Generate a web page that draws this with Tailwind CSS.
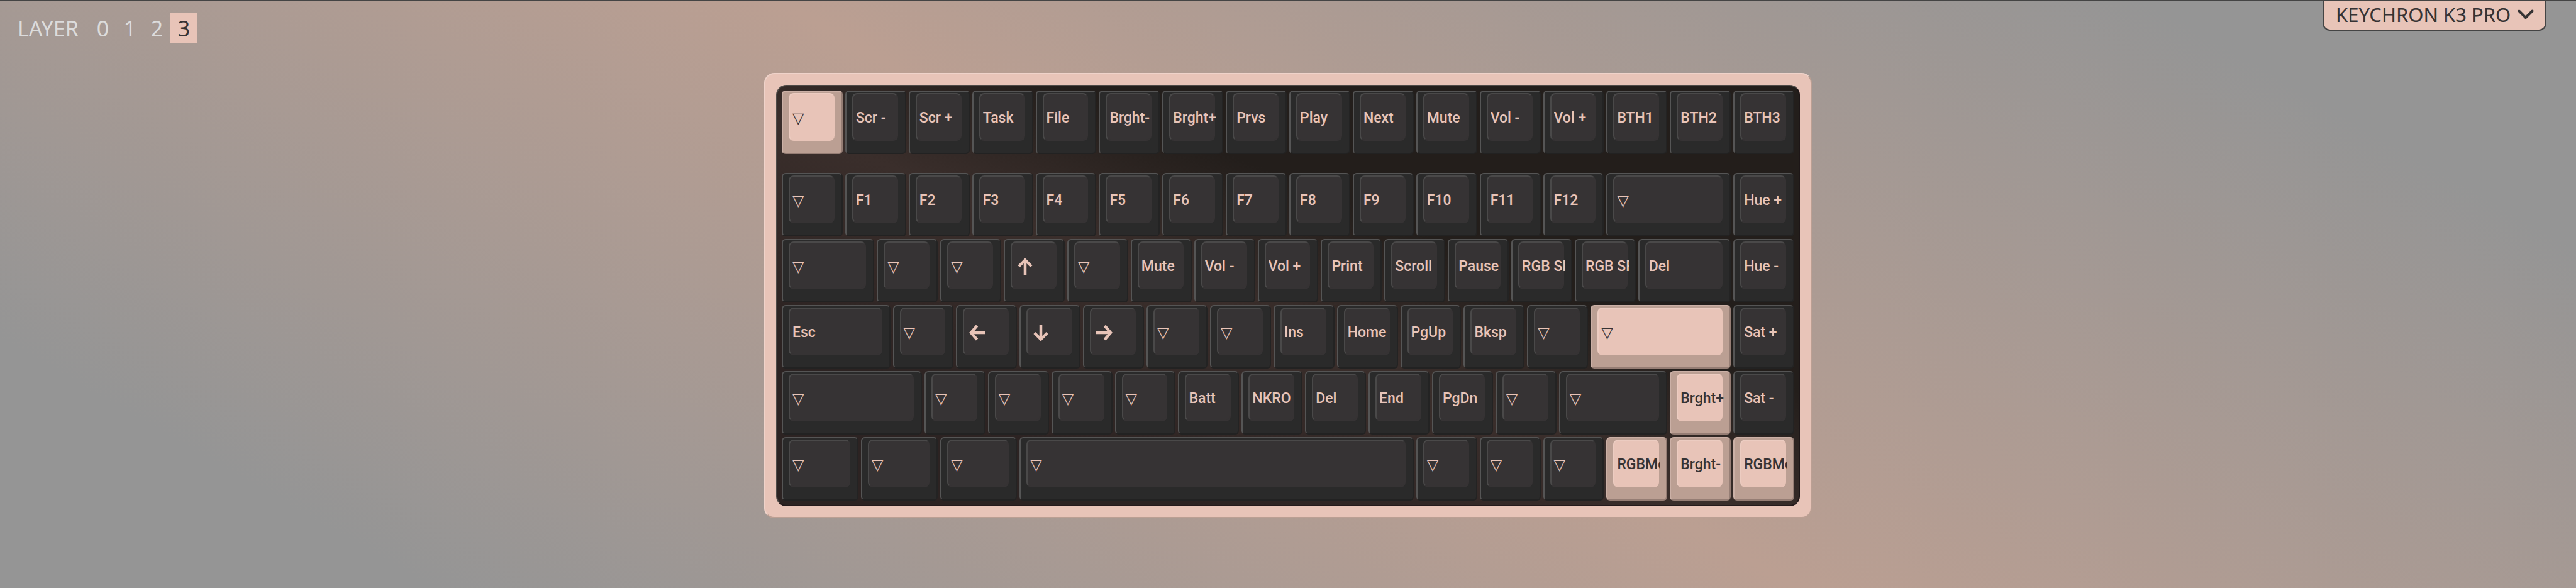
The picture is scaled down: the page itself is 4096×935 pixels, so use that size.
<!DOCTYPE html>
<html lang="en">
<head>
<meta charset="utf-8">
<meta name="viewport" content="width=device-width, initial-scale=1">
<title>Keychron K3 Pro</title>
<script src="https://cdn.jsdelivr.net/npm/@tailwindcss/browser@4"></script>
</head>
<body class="min-h-screen flex flex-col border-t-2 border-[#444444] bg-[linear-gradient(210deg,#959595_12%,#bb9f92_50%,#959595_88%)] font-['Noto_Sans',sans-serif]">
  <header class="flex items-start justify-between pl-7 pr-[47px]">
    <nav aria-label="Layer" class="flex items-center pt-[19px] text-[34px] leading-[48px] text-[#dcdcdc]">
      <span class="w-[114px]">LAYER</span>
      <button type="button" class="w-[43px] h-12">0</button>
      <button type="button" class="w-[43px] h-12">1</button>
      <button type="button" class="w-[43px] h-12">2</button>
      <button type="button" aria-pressed="true" class="w-[43px] h-12 bg-[#e8c4b8] text-[#363334]">3</button>
    </nav>
    <div class="relative">
      <select aria-label="Keyboard" class="block appearance-none h-[47px] w-[356px] pl-[19px] pr-10 pb-1 rounded-b-xl border-2 border-t-0 border-[#444444] bg-[#e8c4b8] text-[31px] leading-[42px] text-[#363334]">
        <option>KEYCHRON K3 PRO</option>
      </select>
      <svg class="absolute right-5 top-3 w-[26px] h-[18px] pointer-events-none" viewBox="0 0 26 18" fill="none" stroke="#363334" stroke-width="4" stroke-linecap="round" stroke-linejoin="round" aria-hidden="true"><path d="M2.5 3.5 13 14 23.500 3.500"/></svg>
    </div>
  </header>

  <main class="flex justify-center pt-[47px]">
    <div class="w-full max-w-[1666px] p-[17px] rounded-2xl border-2 border-t-[#efd3ca] border-l-[#efd3ca] border-r-[#bb9f93] border-b-[#bb9f93] bg-[#e8c4b8]">
      <div id="board" class="grid grid-cols-64 gap-1 p-[7px] rounded-2xl border-2 border-t-[#4f4b48] border-l-[#4f4b48] border-r-[#1d1617] border-b-[#241a1b] bg-[linear-gradient(to_bottom_left,#231e1b_36%,#3a2e2b_54%,#2c2322_80%)]"></div>
    </div>
  </main>

<script>
  const span = {
    1: 'col-span-4', 1.25: 'col-span-5', 1.5: 'col-span-6', 1.75: 'col-span-7',
    2: 'col-span-8', 2.25: 'col-span-9', 6.25: 'col-span-25'
  };

  // A key is a label, or [label, width in units, accent].
  const T = '▽';
  const rows = [
    [[T, 1, true], 'Scr -', 'Scr +', 'Task', 'File', 'Brght-', 'Brght+', 'Prvs', 'Play', 'Next', 'Mute', 'Vol -', 'Vol +', 'BTH1', 'BTH2', 'BTH3'],
    [T, 'F1', 'F2', 'F3', 'F4', 'F5', 'F6', 'F7', 'F8', 'F9', 'F10', 'F11', 'F12', [T, 2], 'Hue +'],
    [[T, 1.5], T, T, 'up', T, 'Mute', 'Vol -', 'Vol +', 'Print', 'Scroll', 'Pause', 'RGB SPI', 'RGB SPD', ['Del', 1.5], 'Hue -'],
    [['Esc', 1.75], T, 'left', 'down', 'right', T, T, 'Ins', 'Home', 'PgUp', 'Bksp', T, [T, 2.25, true], 'Sat +'],
    [[T, 2.25], T, T, T, T, 'Batt', 'NKRO', 'Del', 'End', 'PgDn', T, [T, 1.75], ['Brght+', 1, true], 'Sat -'],
    [[T, 1.25], [T, 1.25], [T, 1.25], [T, 6.25], T, T, T, ['RGBMod', 1, true], ['Brght-', 1, true], ['RGBMod', 1, true]]
  ];

  const arrows = {
    up: 'M13 26V3M3 12.500 13 2.500 23 12.500',
    down: 'M13 0V23M3 13.500 13 23.500 23 13.500',
    left: 'M26 13H3M12.500 2 3 13 12.500 24',
    right: 'M0 13H23M13.500 2 23 13 13.500 24'
  };

  function legend(label) {
    if (arrows[label]) {
      return `<svg class="ml-1 mt-1 size-[26px] shrink-0" viewBox="0 0 26 26" fill="none" stroke="currentColor" stroke-width="4.500" role="img" aria-label="${label}"><path d="${arrows[label]}"/></svg>`;
    }
    if (label === T) return `<span class="pt-1 font-['DejaVu_Sans'] font-bold text-[24px] leading-8">${label}</span>`;
    return `<span class="w-[calc(100%+4px)] pt-1 shrink-0 overflow-hidden whitespace-nowrap text-left">${label}</span>`;
  }

  function keyHtml(key) {
    const [label, units, accent] = Array.isArray(key) ? key : [key, 1, false];
    const cap = accent
      ? 'bg-[#bb9f93] border-t-[#cbb0a6] border-l-[#cbb0a6] border-r-[#957d74] border-b-[#957d74] text-[#363334]'
      : 'bg-[#2a2a2a] border-t-[#555555] border-l-[#555555] border-r-[#232323] border-b-[#222222] text-[#e8c4b8]';
    const face = accent
      ? 'bg-[#e8c4b8] border-t-[#ecccc1] border-l-[#ecccc1] border-r-[#e8c4b8] border-b-[#e8c4b8]'
      : 'bg-[#363334] border-t-[#4a4949] border-l-[#4a4949] border-r-[#363334] border-b-[#363334]';
    return `<button type="button" class="${span[units || 1]} h-[101px] pl-[9px] pr-[11px] pt-[2px] pb-[19px] rounded-md border-2 ${cap}">
      <span class="flex items-center h-full pl-1 rounded-lg border-2 ${face} font-['Roboto'] text-[23px] leading-[32px] font-medium">${legend(label)}</span>
    </button>`;
  }

  document.getElementById('board').innerHTML = rows
    .map(row => row.map(keyHtml).join(''))
    .join('|')
    .replace('|', '<div class="col-span-64 h-[22px]"></div>')
    .replaceAll('|', '');
</script>
</body>
</html>
